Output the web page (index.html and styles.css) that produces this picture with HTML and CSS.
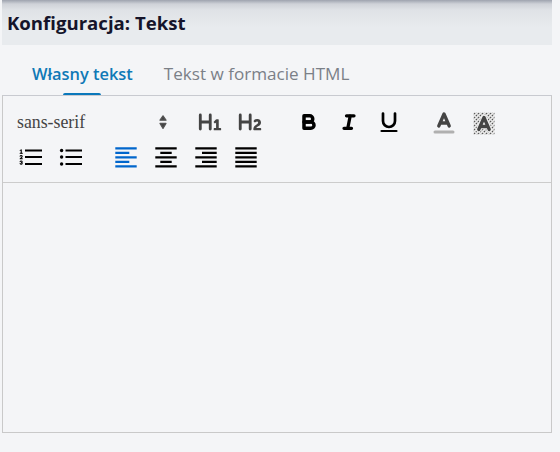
FILE: index.html
```html
<!DOCTYPE html>
<html lang="pl">
<head>
<meta charset="utf-8">
<title>Konfiguracja: Tekst</title>
<link rel="stylesheet" href="styles.css">
</head>
<body>
<div class="panel">
  <header class="head"><h1 class="title">Konfiguracja: Tekst</h1></header>
  <nav class="tabs">
    <a class="tab active"><span class="tab-label">Własny tekst</span><span class="tab-bar"></span></a>
    <a class="tab"><span class="tab-label">Tekst w formacie HTML</span><span class="tab-bar"></span></a>
  </nav>
  <section class="editor">
    <div class="toolbar">
      <div class="row">
        <div class="font-select"><span class="font-name">sans-serif</span>
          <svg class="arrows" viewBox="0 0 8 14"><path class="f" d="M4 .8 7 5.2H1Z M4 13.4 7 8.4H1Z" stroke="#555" stroke-width="1.2" stroke-linejoin="round"/></svg>
        </div>
        <div class="group heads">
          <svg class="ic" viewBox="0 0 28 24"><g transform="translate(14 12) scale(1.42) translate(-8.83 -9)"><path class="f" d="M10,4V14a1,1,0,0,1-2,0V10H3v4a1,1,0,0,1-2,0V4A1,1,0,0,1,3,4V8H8V4a1,1,0,0,1,2,0Zm6.06787,9.209H14.98975V7.59863a.54085.54085,0,0,0-.605-.60547h-.62744a1.01119,1.01119,0,0,0-.748.29688L11.645,8.56641a.5435.5435,0,0,0-.022.8584l.28613.30762a.53861.53861,0,0,0,.84717.0332l.09912-.08789a1.2137,1.2137,0,0,0,.2417-.35254h.02246s-.01123.30859-.01123.60547V13.209H12.041a.54085.54085,0,0,0-.605.60547v.43945a.54085.54085,0,0,0,.605.60547h4.02686a.54085.54085,0,0,0,.605-.60547v-.43945A.54085.54085,0,0,0,16.06787,13.209Z"/></g></svg>
          <svg class="ic" viewBox="0 0 28 24"><g transform="translate(14 12) scale(1.42) translate(-8.87 -9)"><path class="f" d="M16.73975,13.81445v.43945a.54085.54085,0,0,1-.605.60547H11.855a.58392.58392,0,0,1-.64893-.60547V14.0127c0-2.90527,3.39941-3.42187,3.39941-4.55469a.77675.77675,0,0,0-.84717-.78125,1.17684,1.17684,0,0,0-.83594.38477c-.2749.26367-.561.374-.85791.13184l-.4292-.34082c-.30811-.24219-.38525-.51758-.1543-.81445a2.97155,2.97155,0,0,1,2.45361-1.17676,2.45393,2.45393,0,0,1,2.68408,2.40918c0,2.45312-3.1792,2.92676-3.27832,3.93848h2.79443A.54085.54085,0,0,1,16.73975,13.81445ZM9,3A.99974.99974,0,0,0,8,4V8H3V4A1,1,0,0,0,1,4V14a1,1,0,0,0,2,0V10H8v4a1,1,0,0,0,2,0V4A.99974.99974,0,0,0,9,3Z"/></g></svg>
        </div>
        <div class="group marks">
          <svg class="ic" viewBox="0 0 28 24"><g transform="translate(14 12) scale(1.25) translate(-9 -9)"><path class="k" stroke-width="2.8" d="M5,4H9.5A2.5,2.5,0,0,1,12,6.5v0A2.5,2.5,0,0,1,9.5,9H5A0,0,0,0,1,5,9V4A0,0,0,0,1,5,4Z"/><path class="k" stroke-width="2.8" d="M5,9h5.5A2.5,2.5,0,0,1,13,11.5v0A2.5,2.5,0,0,1,10.5,14H5a0,0,0,0,1,0,0V9A0,0,0,0,1,5,9Z"/></g></svg>
          <svg class="ic" viewBox="0 0 28 24"><g transform="translate(14 12) scale(1.25) translate(-9 -9)"><path class="k" stroke-width="2.6" d="M7 4H13M5 14H11M8 14 10 4"/></g></svg>
          <svg class="ic" viewBox="0 0 28 24"><path class="k" stroke-width="2.7" d="M8 3.5V11a6 6 0 0 0 12 0V3.5"/><path class="k" stroke-width="2.2" d="M6.5 21H21.5"/></svg>
        </div>
        <div class="group colors">
          <svg class="ic" viewBox="0 0 28 24"><g transform="translate(14 13) scale(1.5) translate(-9 -9)"><path class="l" stroke-width="2" d="M3 15H15"/><path class="d" stroke-width="2.2" d="M5.5 11 9 3 12.5 11M11.63 9H6.38"/></g></svg>
          <svg class="ic" viewBox="0 0 28 24">
            <defs><pattern id="hatch" width="4" height="4" patternUnits="userSpaceOnUse"><rect width="4" height="4" fill="#ececec"/><path d="M0 4 4 0M-1 1 1 -1M3 5 5 3" stroke="#555" stroke-width="1.2" stroke-dasharray="1.6 1"/></pattern></defs>
            <rect x="3.5" y="2.5" width="21" height="22" fill="url(#hatch)"/>
            <g transform="translate(14 13.5) scale(1.5) translate(-9 -9)"><path class="h" stroke-width="3.6" d="M5.5 13 9 5 12.5 13M11.63 11H6.38"/><path class="d" stroke-width="2.2" d="M5.5 13 9 5 12.5 13M11.63 11H6.38"/></g>
          </svg>
        </div>
      </div>
      <div class="row lower">
        <div class="group">
          <svg class="ic" viewBox="0 0 28 24"><path class="k b" d="M9 5.5H26M9 12H26M9 19H26"/><g transform="translate(1.4 2.2) scale(1.1)"><path class="num" d="M2.5 5.5H4.5M4.5 10.5h-2c0-.234 1.85-1.076 1.85-2.234A.959.959 0 0 0 2.5 8.156M2.5 14.846a.959.959 0 0 0 1.85-.109A.7.7 0 0 0 3.75 14a.688.688 0 0 0 .6-.736.959.959 0 0 0-1.85-.109"/><path class="blk" d="M3.5 6A.5.5 0 0 1 3 5.5V3.085l-.276.138A.5.5 0 0 1 2.053 3c-.124-.247-.023-.324.224-.447l1-.5A.5.5 0 0 1 4 2.5v3A.5.5 0 0 1 3.5 6Z"/></g></svg>
          <svg class="ic" viewBox="0 0 28 24"><path class="k b" d="M9.5 5.5H26M9.5 12H26M9.5 19H26"/><circle class="blk" cx="5.6" cy="5.5" r="1.7"/><circle class="blk" cx="5.6" cy="12" r="1.7"/><circle class="blk" cx="5.6" cy="19" r="1.7"/></svg>
        </div>
        <div class="group aligns">
          <svg class="ic" viewBox="0 0 28 24"><path class="blue" d="M3.3 3.4H24.7M3.3 7.8H17.3M3.3 12.3H24.7M3.3 16.9H17.3M3.3 21.3H24.7"/></svg>
          <svg class="ic" viewBox="0 0 28 24"><path class="k b" d="M3.3 3.4H24.7M8.3 7.8H19.7M3.3 12.3H24.7M8.3 16.9H19.7M3.3 21.3H24.7"/></svg>
          <svg class="ic" viewBox="0 0 28 24"><path class="k b" d="M3.3 3.4H24.7M10 7.8H24.7M3.3 12.3H24.7M10 16.9H24.7M3.3 21.3H24.7"/></svg>
          <svg class="ic" viewBox="0 0 28 24"><path class="k b" d="M3.3 3.4H24.7M3.3 7.8H24.7M3.3 12.3H24.7M3.3 16.9H24.7M3.3 21.3H24.7"/></svg>
        </div>
      </div>
    </div>
    <div class="content"></div>
  </section>
</div>
</body>
</html>
```
FILE: styles.css
```css
html, body { margin: 0; padding: 0; height: 100%; }
body { background: #f4f5f7; font-family: "Open Sans", "Noto Sans", sans-serif; overflow: hidden; }
.panel { width: 550px; margin-left: 2px; }
.head { height: 45px; display: flex; align-items: center; padding-left: 5px; box-sizing: border-box; background: linear-gradient(#9ea3ae 0, #cfd2d8 4px, #dfe2e6 10px, #e8ebee 28px); }
.title { margin: 0; font-size: 18.6px; font-weight: 700; color: #15142a; }
.tabs { height: 50px; display: flex; gap: 31px; padding-left: 30px; }
.tab { display: flex; flex-direction: column; align-items: center; justify-content: flex-end; font-size: 17.1px; color: #7b8087; font-weight: 500; }
.tab.active { color: #0f79b6; font-size: 16.4px; font-weight: 600; }
.tab-label { line-height: 24px; margin-bottom: 7px; }
.tab-bar { width: 38px; height: 2px; }
.active .tab-bar { background: #0a78bb; border-radius: 2px 2px 0 0; }
.editor { height: 338px; box-sizing: border-box; border: 1px solid #c9c9c9; border-top-color: #c8cad0; display: flex; flex-direction: column; }
.toolbar { padding: 14px 0 13px 13px; border-bottom: 1px solid #cccccc; display: flex; flex-direction: column; gap: 11px; }
.row { display: flex; height: 24px; }
.group { display: flex; gap: 12px; }
.font-select { width: 151px; padding-left: 1px; box-sizing: border-box; display: flex; align-items: center; justify-content: space-between; }
.font-name { font-family: "Liberation Serif", serif; font-size: 17.8px; color: #444; }
.arrows { width: 8px; height: 14px; margin-right: 0; }
.heads { margin-left: 29px; }
.marks { margin-left: 31px; }
.colors { margin-left: 27px; }
.aligns { margin-left: 28px; }
.ic { width: 28px; height: 24px; overflow: visible; flex: none; display: block; }
.f { fill: #444; }
.k { fill: none; stroke: #000; stroke-linecap: round; stroke-linejoin: round; }
.b { stroke-width: 2.2; stroke-linecap: butt; }
.blue { fill: none; stroke: #06c; stroke-width: 2.2; }
.l { fill: none; stroke: #b0b0b0; stroke-linecap: round; }
.d { fill: none; stroke: #444; stroke-linecap: round; stroke-linejoin: round; }
.h { fill: none; stroke: #f0f0f0; stroke-linecap: round; stroke-linejoin: round; }
.num { fill: none; stroke: #000; stroke-width: 1; stroke-linecap: round; stroke-linejoin: round; }
.blk { fill: #000; }
.content { flex: 1; }
```
